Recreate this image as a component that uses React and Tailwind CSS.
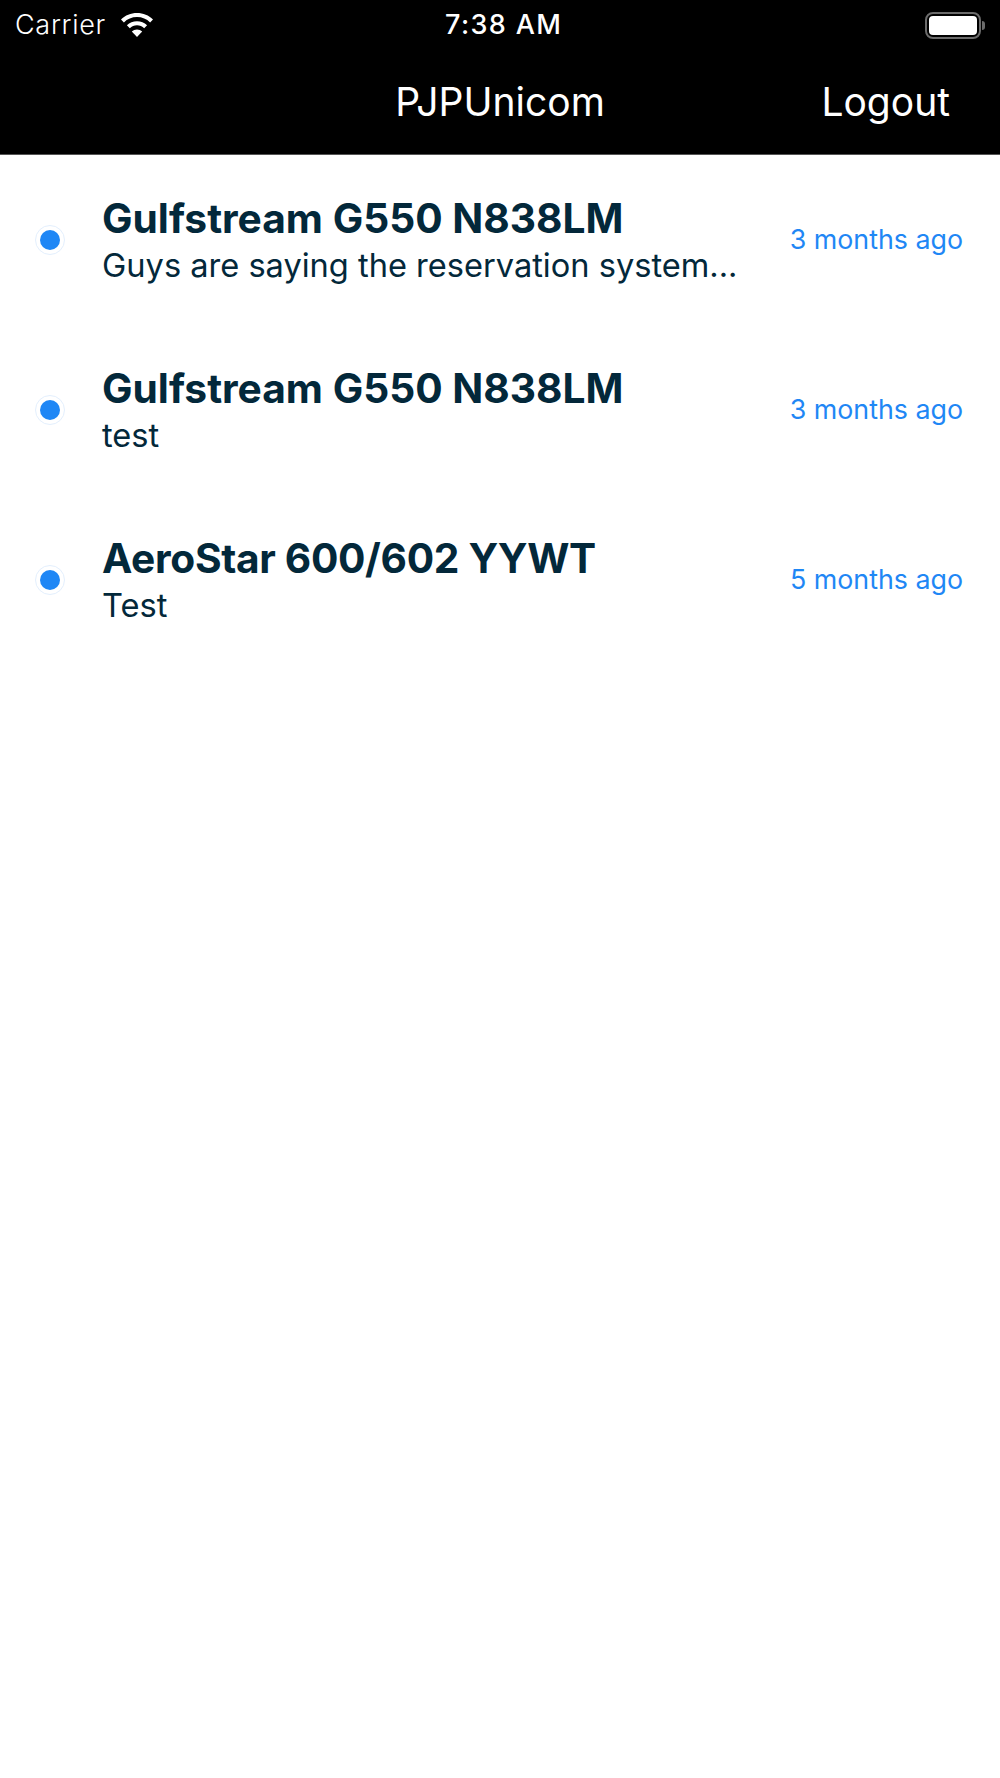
import React from 'react';

const threads = [
  { title: 'Gulfstream G550 N838LM', body: 'Guys are saying the reservation system...', when: '3 months ago', titleClass: '' },
  { title: 'Gulfstream G550 N838LM', body: 'test', when: '3 months ago', titleClass: '' },
  { title: 'AeroStar 600/602 YYWT', body: 'Test', when: '5 months ago', titleClass: 'tracking-[-0.33px]' },
];

function Wifi() {
  return (
    <svg width="34" height="25" viewBox="0 0 33 25" fill="white">
      <path d="M16.5 0C10.3 0 4.7 2.4.5 6.4l2.9 3C6.800 6.100 11.400 4.100 16.500 4.100s9.700 2 13.100 5.300l2.900-3C28.300 2.400 22.700 0 16.500 0z" />
      <path d="M16.500 8.200c-3.900 0-7.400 1.500-10.100 4l2.900 3c1.900-1.800 4.400-2.900 7.200-2.900s5.300 1.100 7.200 2.900l2.900-3c-2.700-2.500-6.200-4-10.100-4z" />
      <path d="M16.500 16.400c-2 0-3.800.800-5.200 2.100l5.200 5.500 5.200-5.500c-1.400-1.300-3.200-2.100-5.200-2.100z" />
    </svg>
  );
}

function Battery() {
  return (
    <div className="flex items-center">
      <div className="w-[56px] h-[27px] rounded-[8px] border-2 border-[#6b6b6b] p-[2px]">
        <div className="w-full h-full rounded-[4px] bg-white" />
      </div>
      <div className="w-[3px] h-[9px] ml-[1px] rounded-r-full bg-[#6b6b6b]" />
    </div>
  );
}

function ThreadRow({ title, body, when, titleClass }) {
  return (
    <div className="flex items-center h-[170px]">
      <div className="w-[102px] shrink-0 pl-[35px]">
        <div className="w-[30px] h-[30px] rounded-full border border-[#e3effd] flex items-center justify-center">
          <div className="w-[20px] h-[20px] rounded-full bg-[#1f87f5]" />
        </div>
      </div>
      <div className="flex-1 min-w-0 text-[#03283a]">
        <div className={`text-[40.7px] leading-[48px] mt-[2px] font-bold whitespace-nowrap ${titleClass}`}>{title}</div>
        <div className="text-[32.6px] leading-[46px] -mt-[1px] whitespace-nowrap">{body}</div>
      </div>
      <div className="pr-[37px] text-[26.8px] text-[#1f87f5] -translate-y-[1px]">{when}</div>
    </div>
  );
}

export default function App() {
  return (
    <div className="min-h-[1778px] bg-white font-['Inter',sans-serif]">
      <div className="bg-black text-white h-[155px] border-b border-[#555555]">
        <div className="flex items-center justify-between h-[50px] pl-[15px] pr-[15px] relative">
          <div className="flex items-center gap-[14px]">
            <span className="text-[27px] tracking-[0.7px] font-light">Carrier</span>
            <Wifi />
          </div>
          <span className="absolute left-[445px] text-[27px] font-medium tracking-[1.4px]">7:38 AM</span>
          <Battery />
        </div>
        <div className="flex items-center justify-center h-[104px] relative">
          <span className="text-[39px]">PJPUnicom</span>
          <span className="absolute right-[50px] text-[39px]">Logout</span>
        </div>
      </div>
      {threads.map((t, i) => (
        <ThreadRow key={i} {...t} />
      ))}
    </div>
  );
}
